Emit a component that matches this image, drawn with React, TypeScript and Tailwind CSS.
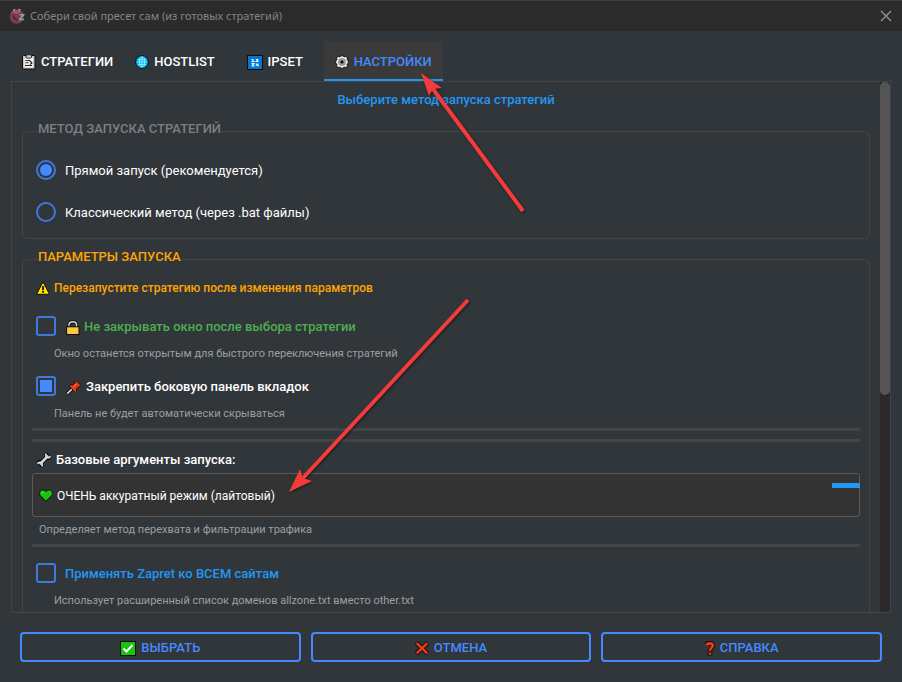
import React from "react";

type IconProps = { className?: string };

const ClipboardIcon = ({ className }: IconProps) => (
  <svg viewBox="0 0 14 16" className={className} aria-hidden="true">
    <rect x="0.5" y="1.5" width="12.5" height="13.5" rx="1" fill="#cfc4bb" stroke="#0c0c0c" />
    <rect x="2.5" y="4" width="8.5" height="9.5" fill="#f7f7f7" />
    <rect x="4" y="0.8" width="5.5" height="3.4" rx="1" fill="#c9c9c9" stroke="#0c0c0c" strokeWidth="0.8" />
    <path d="M3.5 6.5h4M3.5 8.8h3M3 11.5h7M7.500 6.500l2.500 2.500-2 1.500" stroke="#222" strokeWidth="1.1" fill="none" />
  </svg>
);

const GlobeIcon = ({ className }: IconProps) => (
  <svg viewBox="0 0 14 14" className={className} aria-hidden="true">
    <circle cx="7" cy="7" r="6.4" fill="#00b4f0" stroke="#0c0c0c" strokeWidth="1" />
    <g fill="none" stroke="#a8ecff" strokeWidth="0.8">
      <path d="M7 2v10M2 7h10M3 4.600h8M3 9.400h8" />
      <ellipse cx="7" cy="7" rx="2.6" ry="5" />
    </g>
  </svg>
);

const NumbersIcon = ({ className }: IconProps) => (
  <svg viewBox="0 0 16 15" className={className} aria-hidden="true">
    <rect x="0.5" y="0.5" width="15" height="14" fill="#0078d7" stroke="#0c0c0c" />
    <g fill="none" stroke="#fff" strokeWidth="1.1">
      <path d="M4.500 4.500h1.400v2.200M4.500 6.500h3M8.800 4.500h2v.800l-1.500 1.200h2.200M4.500 8.600h2.300l-1 1.200 1 1.200H4.500M9.300 8.400v1.600h2.400M10.900 8.400v3" />
    </g>
  </svg>
);

const GearIcon = ({ className }: IconProps) => (
  <svg viewBox="0 0 14 14" className={className} aria-hidden="true">
    <path
      d="M3.200 1.300 5 2l.6-1.200h2.800L9 2l1.800-.7 1.700 1.900-.6 1.600 1.400.8v2.800l-1.400.8.6 1.600-1.700 1.900L9 12l-.6 1.200H5.600L5 12l-1.800.7-1.700-1.900.6-1.600-1.400-.8V5.600l1.400-.8-.6-1.600z"
      fill="#ececec"
      stroke="#0c0c0c"
      strokeWidth="0.9"
    />
    <circle cx="7" cy="7" r="3.400" fill="#b5b5b5" stroke="#666" strokeWidth="0.8" />
    <circle cx="7" cy="7" r="1.700" fill="#0c0c0c" />
  </svg>
);

const WarningIcon = ({ className }: IconProps) => (
  <svg viewBox="0 0 14 14" className={className} aria-hidden="true">
    <path d="M7 .8 13.500 13.300H.5z" fill="#fde300" stroke="#0c0c0c" strokeWidth="1" strokeLinejoin="round" />
    <path d="M7 5v4.200M7 10v1.700" stroke="#0c0c0c" strokeWidth="1.700" />
  </svg>
);

const LockIcon = ({ className }: IconProps) => (
  <svg viewBox="0 0 14 15" className={className} aria-hidden="true">
    <path d="M3 6V4.600C3 .8 10.500.8 10.500 4.600V8" fill="none" stroke="#0c0c0c" strokeWidth="3" />
    <path d="M3 5.800V4.600C3 .8 10.500.8 10.500 4.600V8" fill="none" stroke="#d8d8d8" strokeWidth="1.500" />
    <rect x="0.6" y="6.800" width="12.400" height="7.700" fill="#ffc83d" stroke="#0c0c0c" />
  </svg>
);

const PinIcon = ({ className }: IconProps) => (
  <svg viewBox="0 0 16 15" className={className} aria-hidden="true">
    <path d="M1 14 6 9" stroke="#0c0c0c" strokeWidth="3.400" />
    <path d="M1.300 13.700 6 9" stroke="#e0e0e0" strokeWidth="1.700" />
    <path
      d="M10 .6 15 5.500l-1.200 1.200-1.200-.3-2.100 2.200.1 2.800-1.200 1.200L3 6l1.200-1.100 2.900.1 2.100-2-.3-1.300z"
      fill="#f03a17"
      stroke="#0c0c0c"
      strokeWidth="0.8"
      strokeLinejoin="round"
    />
    <path d="M7.500 6.500 10 4" stroke="#ff8a65" strokeWidth="1" />
  </svg>
);

const WrenchIcon = ({ className }: IconProps) => (
  <svg viewBox="0 0 16 16" className={className} aria-hidden="true">
    <g fill="none" strokeLinecap="round">
      <path d="M4 12 12 4" stroke="#0c0c0c" strokeWidth="4.400" />
      <path d="M13.600 5.800a2.300 2.300 0 1 1-3.200-3.300M2.400 10.200a2.300 2.300 0 1 1 3.200 3.300" stroke="#0c0c0c" strokeWidth="3.400" />
      <path d="M4.500 11.500 11.500 4.500" stroke="#d6d6d6" strokeWidth="2.600" />
      <path d="M14 4.800a2.400 2.400 0 0 1-4-2.500M2 11.200a2.400 2.400 0 0 1 4 2.500" stroke="#d6d6d6" strokeWidth="1.800" />
    </g>
  </svg>
);

const HeartIcon = ({ className }: IconProps) => (
  <svg viewBox="0 0 14 13" className={className} aria-hidden="true">
    <path
      d="M7 12.300 1.300 6.500C-.3 4.500.8 1 3.800 1 5.500 1 6.500 2 7 2.800 7.500 2 8.500 1 10.200 1c3 0 4.100 3.500 2.500 5.500z"
      fill="#16c60c"
      stroke="#0c0c0c"
      strokeWidth="0.9"
    />
    <path d="M3 4.500c0-1 .6-1.400 1.400-1.400" stroke="#8df086" fill="none" />
  </svg>
);

const CheckIcon = ({ className }: IconProps) => (
  <svg viewBox="0 0 16 15" className={className} aria-hidden="true">
    <rect x="0.5" y="0.5" width="15" height="14" fill="#16c60c" stroke="#0c0c0c" />
    <path d="m3.500 7.500 3 3L12.500 4" fill="none" stroke="#fff" strokeWidth="2" />
  </svg>
);

const CrossIcon = ({ className }: IconProps) => (
  <svg viewBox="0 0 14 14" className={className} aria-hidden="true">
    <path d="m1.300 1.800 11.400 10.900m0-10.900L1.300 12.700" stroke="#0c0c0c" strokeWidth="4.200" />
    <path d="m1.700 2.200 10.600 10.100m0-10.100L1.700 12.300" stroke="#f03a17" strokeWidth="2.500" />
  </svg>
);

const QuestionIcon = ({ className }: IconProps) => (
  <svg viewBox="0 0 10 15" className={className} aria-hidden="true">
    <g fill="none" stroke="#0c0c0c" strokeWidth="4.400">
      <path d="M1 4.500C1.500 1.200 8 1.400 7.800 4.500 7.700 6.800 5 6.800 5 10.300" />
      <path d="M5 11v3.500" />
    </g>
    <g fill="none" stroke="#f03a17" strokeWidth="2.600">
      <path d="M1.500 4.500C2 1.600 8 1.600 7.800 4.500 7.700 6.800 5 6.800 5 9.800" />
      <path d="M5 11.500v2.300" />
    </g>
  </svg>
);

const AppLogo = ({ className }: IconProps) => (
  <svg viewBox="0 0 16 16" className={className} aria-hidden="true">
    <circle cx="7.800" cy="8.600" r="7.200" fill="#7c3c49" />
    <path d="M2.500 5C4.500 1.800 10 1 12.500 3.500L8.500 6 5 5.500z" fill="#a05563" />
    <path d="M3.500 3 5.500.4 6.500 2.600zM9 .8l2.800.5L10.500 3z" fill="#c9a5a8" />
    <path d="M4.500 7.500c.3 3 2.500 4.500 5 4.500" fill="none" stroke="#4d232c" strokeWidth="1.500" />
    <path d="M10.500 6.800h4l-4 4.700h4.500" fill="none" stroke="#7fa3bb" strokeWidth="1.500" />
  </svg>
);

const TABS = [
  { label: "СТРАТЕГИИ", Icon: ClipboardIcon, iconClass: "w-[14px] h-4", active: false },
  { label: "HOSTLIST", Icon: GlobeIcon, iconClass: "w-[14px] h-[14px]", active: false },
  { label: "IPSET", Icon: NumbersIcon, iconClass: "w-4 h-[15px]", active: false },
  { label: "НАСТРОЙКИ", Icon: GearIcon, iconClass: "w-[14px] h-[14px]", active: true },
];

const ACTIONS = [
  { label: "ВЫБРАТЬ", Icon: CheckIcon, iconClass: "w-4 h-[15px]" },
  { label: "ОТМЕНА", Icon: CrossIcon, iconClass: "w-[14px] h-[14px]" },
  { label: "СПРАВКА", Icon: QuestionIcon, iconClass: "w-[10px] h-[15px]" },
];

interface RadioRowProps {
  label: string;
  checked?: boolean;
}

const RadioRow: React.FC<RadioRowProps> = ({ label, checked }) => (
  <label className="flex h-[42px] items-center gap-[9px]">
    <input
      type="radio"
      name="launch-method"
      defaultChecked={checked}
      className="size-5 shrink-0 appearance-none rounded-full border-2 border-[#3f79dc] checked:bg-[#448aff] checked:bg-clip-content checked:p-[2px]"
    />
    <span className="pt-[2px]">{label}</span>
  </label>
);

interface CheckRowProps {
  label: string;
  hint: string;
  labelClass: string;
  icon?: React.ReactNode;
  checked?: boolean;
}

const CheckRow: React.FC<CheckRowProps> = ({ label, hint, labelClass, icon, checked }) => (
  <div>
    <label className={`flex h-8 items-center gap-[9px] font-medium ${labelClass}`}>
      <input
        type="checkbox"
        defaultChecked={checked}
        className="size-5 shrink-0 appearance-none rounded-[3px] border-2 border-[#3f79dc] checked:bg-[#448aff] checked:bg-clip-content checked:p-[2px]"
      />
      <span className="flex items-center gap-1 pt-[2px]">
        {icon}
        {label}
      </span>
    </label>
    <p className="ml-[18px] pt-1 pb-2 text-[11px] leading-4 text-[#9e9e9e]">{hint}</p>
  </div>
);

const Divider = () => <div className="-mx-1 h-[3px] bg-[#444444]" />;

// Red pointers drawn over the dialog
const Arrows = () => (
  <svg
    viewBox="0 0 902 682"
    className="pointer-events-none absolute top-0 left-0 h-[682px] w-[902px] drop-shadow-[1px_1px_1px_rgba(0,0,0,0.5)]"
    aria-hidden="true"
  >
    <g stroke="#f43b3b" strokeWidth="4">
      <path d="M523 211 433 89" />
      <path d="M468 300 303 478" />
    </g>
    <g fill="#f43b3b">
      <path d="m421 73 21 15-9 1-4 7z" />
      <path d="m289 492 11-23 3 9 9 3z" />
    </g>
  </svg>
);

const App: React.FC = () => {
  return (
    <div className="relative flex h-screen flex-col overflow-hidden bg-[#31363b] font-[Roboto,sans-serif] text-[13px] leading-4 text-white">
      <header className="flex h-[31px] shrink-0 items-center border-t border-[#3c3c3c] bg-[#2b2b2b] pr-[10px] pl-[9px]">
        <AppLogo className="size-4" />
        <h1 className="ml-[5px] flex-1 font-['Noto_Sans',sans-serif] text-[11px] text-[#858585]">
          Собери свой пресет сам (из готовых стратегий)
        </h1>
        <button type="button" aria-label="Закрыть">
          <svg viewBox="0 0 12 12" className="size-3">
            <path d="m1 1 10 10M11 1 1 11" stroke="#9a9a9a" strokeWidth="1.200" />
          </svg>
        </button>
      </header>

      <nav className="mt-[10px] flex h-10 shrink-0 px-[11px]">
        {TABS.map(({ label, Icon, iconClass, active }) => (
          <button
            key={label}
            type="button"
            className={`flex min-w-[98px] items-center justify-center gap-[5px] border-b-2 px-[11px] pt-[4px] font-medium ${
              active ? "border-[#2196f3] bg-[#3a3a3a] text-[#448aff]" : "border-transparent"
            }`}
          >
            <Icon className={iconClass} />
            {label}
          </button>
        ))}
      </nav>

      <main className="mx-[11px] flex min-h-0 flex-1 border border-[#444444]">
        <div className="min-w-0 flex-1 overflow-hidden px-[10px] pt-[10px]">
          <p className="text-center font-medium text-[#2196f3]">Выберите метод запуска стратегий</p>

          <section className="mt-[23px] rounded-md border border-[#444444] px-[13px] pb-[5px]">
            <h2 className="-mt-[11px] ml-[2px] w-fit bg-[#31363b] font-medium text-[#7d7f81]">
              МЕТОД ЗАПУСКА СТРАТЕГИЙ
            </h2>
            <div className="mt-3">
              <RadioRow label="Прямой запуск (рекомендуется)" checked />
              <RadioRow label="Классический метод (через .bat файлы)" />
            </div>
          </section>

          <section className="mt-5 rounded-md border border-[#444444] px-[13px]">
            <h2 className="-mt-[11px] ml-[2px] w-fit bg-[#31363b] font-medium text-[#ffa500]">
              ПАРАМЕТРЫ ЗАПУСКА
            </h2>
            <p className="mt-[15px] mb-[14px] flex items-center gap-1 text-[12px] font-medium text-[#ffa500]">
              <WarningIcon className="size-[14px]" />
              Перезапустите стратегию после изменения параметров
            </p>

            <CheckRow
              label="Не закрывать окно после выбора стратегии"
              hint="Окно останется открытым для быстрого переключения стратегий"
              labelClass="text-[#4caf50]"
              icon={<LockIcon className="ml-px h-[15px] w-[14px]" />}
            />
            <CheckRow
              label="Закрепить боковую панель вкладок"
              hint="Панель не будет автоматически скрываться"
              labelClass="text-white"
              icon={<PinIcon className="ml-px h-[15px] w-4" />}
              checked
            />

            <div className="-mt-[2px] flex flex-col gap-2">
              <Divider />
              <Divider />
            </div>

            <label htmlFor="base-args" className="mt-[10px] mb-[5px] flex items-center gap-1 font-medium">
              <WrenchIcon className="size-4" />
              Базовые аргументы запуска:
            </label>
            <div className="relative -mx-1 flex h-11 items-center rounded-[3px] border border-[#5a5a5a] bg-[#333333]">
              <HeartIcon className="ml-[6px] h-[13px] w-[14px]" />
              <select id="base-args" className="h-full flex-1 appearance-none bg-transparent pt-[2px] pl-1 text-[12px]">
                <option>ОЧЕНЬ аккуратный режим (лайтовый)</option>
              </select>
              <span className="absolute top-[9px] -right-px h-[5px] w-7 bg-[#2196f3]" />
            </div>
            <p className="mt-[5px] mb-[6px] ml-[3px] text-[11px] leading-4 text-[#9e9e9e]">
              Определяет метод перехвата и фильтрации трафика
            </p>
            <Divider />

            <div className="mt-[10px]">
              <CheckRow
                label="Применять Zapret ко ВСЕМ сайтам"
                hint="Использует расширенный список доменов allzone.txt вместо other.txt"
                labelClass="text-[#2196f3]"
              />
            </div>
          </section>
        </div>

        <div className="w-[10px] shrink-0 bg-[#2a2a2a]">
          <div className="h-[59%] rounded-[5px] bg-[#555555]" />
        </div>
      </main>

      <footer className="grid shrink-0 grid-cols-3 gap-[10px] px-5 pt-[19px] pb-5">
        {ACTIONS.map(({ label, Icon, iconClass }) => (
          <button
            key={label}
            type="button"
            className="flex h-[30px] items-center justify-center gap-[5px] rounded border-2 border-[#448aff] pt-[2px] font-medium text-[#448aff]"
          >
            <Icon className={iconClass} />
            {label}
          </button>
        ))}
      </footer>

      <Arrows />
    </div>
  );
};

export default App;
